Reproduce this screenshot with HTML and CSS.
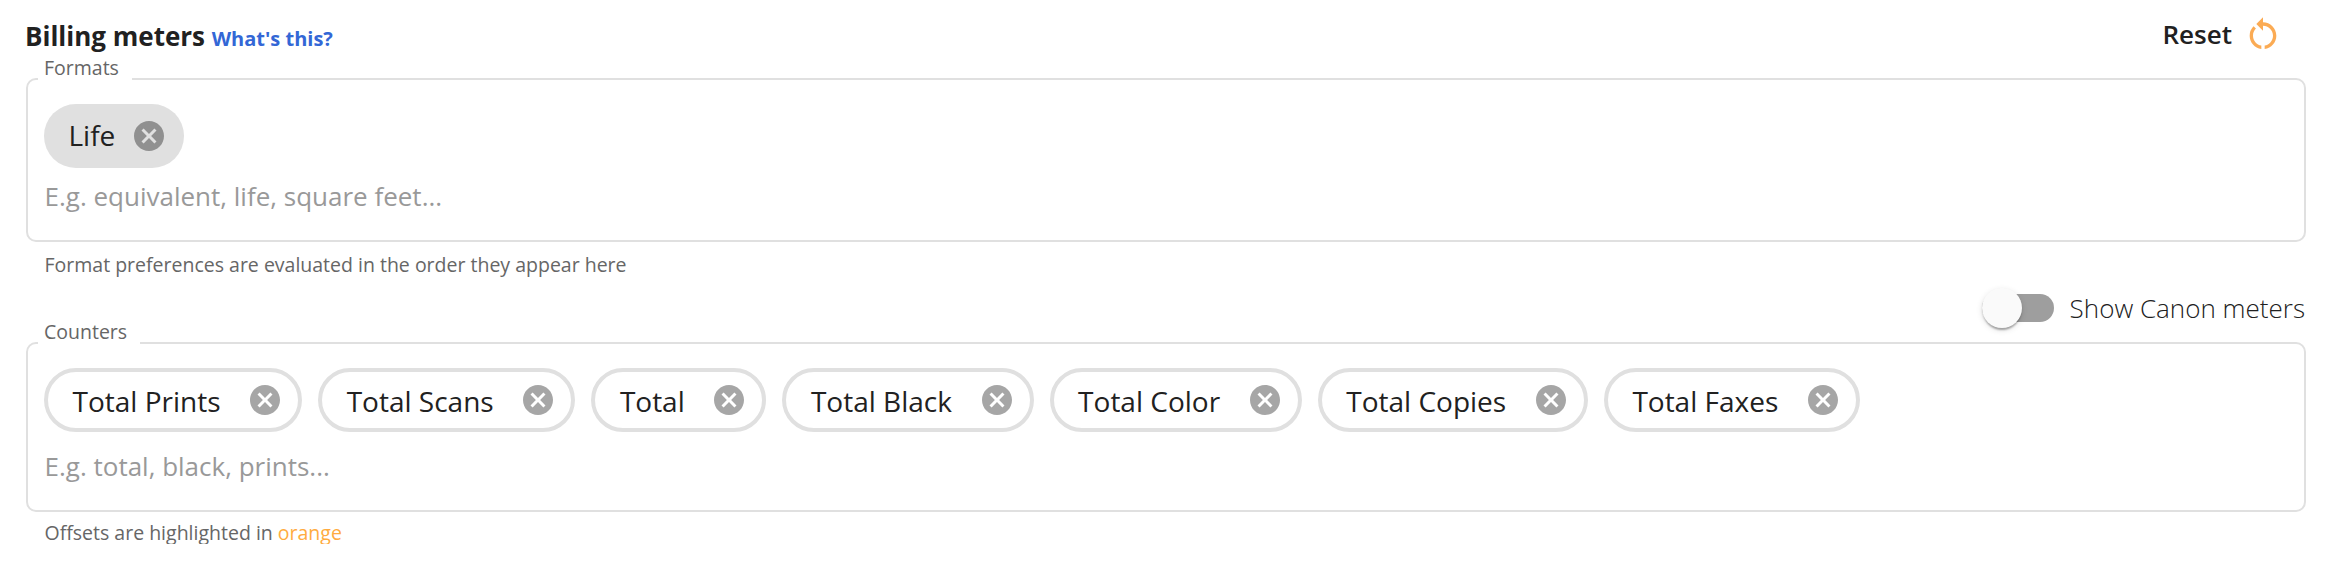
FILE: index.html
```
<!DOCTYPE html>
<html lang="en">
<head>
<meta charset="utf-8">
<title>Billing meters</title>
<link rel="stylesheet" href="styles.css">
</head>
<body>
<svg class="symbols" width="0" height="0" aria-hidden="true">
  <symbol id="cancel" viewBox="0 0 24 24"><path d="M12 2C6.47 2 2 6.47 2 12s4.47 10 10 10 10-4.47 10-10S17.53 2 12 2zm5 13.59L15.59 17 12 13.41 8.41 17 7 15.59 10.59 12 7 8.41 8.41 7 12 10.59 15.59 7 17 8.41 13.41 12 17 15.59z"/></symbol>
</svg>
<main class="page">
  <header class="header">
    <h1 class="title">Billing meters <a class="help">What's this?</a></h1>
    <div class="reset"><span class="reset-text">Reset</span>
      <svg class="reset-icon" viewBox="0 0 24 24"><path d="M12 5V2L8 6l4 4V7c3.31 0 6 2.69 6 6 0 2.97-2.17 5.43-5 5.91v2.02c3.95-.49 7-3.85 7-7.93 0-4.42-3.58-8-8-8zm-6 8c0-1.65.67-3.15 1.76-4.24L6.34 7.34A8.014 8.014 0 0 0 4 13c0 4.08 3.05 7.44 7 7.93v-2.02c-2.83-.48-5-2.94-5-5.91z"/></svg>
    </div>
  </header>
  <section class="field formats">
    <span class="label">Formats</span>
    <div class="chips">
      <span class="chip filled"><span class="chip-text">Life</span><svg class="remove"><use href="#cancel"/></svg></span>
    </div>
    <div class="placeholder">E.g. equivalent, life, square feet...</div>
  </section>
  <p class="hint">Format preferences are evaluated in the order they appear here</p>
  <div class="toggle-row">
    <span class="toggle"><span class="thumb"></span></span>
    <span class="toggle-text">Show Canon meters</span>
  </div>
  <section class="field counters">
    <span class="label">Counters</span>
    <div class="chips">
      <span class="chip"><span class="chip-text">Total Prints</span><svg class="remove"><use href="#cancel"/></svg></span>
      <span class="chip"><span class="chip-text">Total Scans</span><svg class="remove"><use href="#cancel"/></svg></span>
      <span class="chip"><span class="chip-text">Total</span><svg class="remove"><use href="#cancel"/></svg></span>
      <span class="chip"><span class="chip-text">Total Black</span><svg class="remove"><use href="#cancel"/></svg></span>
      <span class="chip"><span class="chip-text">Total Color</span><svg class="remove"><use href="#cancel"/></svg></span>
      <span class="chip"><span class="chip-text">Total Copies</span><svg class="remove"><use href="#cancel"/></svg></span>
      <span class="chip"><span class="chip-text">Total Faxes</span><svg class="remove"><use href="#cancel"/></svg></span>
    </div>
    <div class="placeholder">E.g. total, black, prints...</div>
  </section>
  <p class="hint">Offsets are highlighted in <span class="orange">orange</span></p>
</main>
</body>
</html>
```
FILE: styles.css
```
* { box-sizing: border-box; }
body {
  margin: 0;
  background: #fff;
  color: #212121;
  font-family: "Open Sans", "Noto Sans", sans-serif;
  font-size: 26px;
}
.symbols { display: block; }
.page { padding: 0 26px; }
.header {
  display: flex;
  justify-content: space-between;
  height: 78px;
}
.title {
  margin: 0 0 0 -1px;
  padding-top: 18px;
  font-size: 26px;
  font-weight: 700;
  line-height: 36px;
}
.help { font-size: 20px; color: #3367d6; }
.reset {
  display: flex;
  align-items: center;
  gap: 11px;
  height: 40px;
  margin: 14px 23px 0 0;
  font-weight: 600;
}
.reset-icon { width: 40px; height: 40px; fill: #fbab54; }
.field {
  position: relative;
  padding: 24px 16px 0;
  border: 2px solid #e0e0e0;
  border-radius: 10px;
}
.formats { height: 164px; }
.counters { height: 170px; }
.label {
  position: absolute;
  top: -26px;
  left: 10px;
  padding: 0 13px 0 6px;
  background: #fff;
  color: #666;
  font-size: 19.5px;
  line-height: 28px;
}
.chips { display: flex; gap: 16px; }
.chip {
  display: flex;
  align-items: center;
  height: 64px;
  padding: 0 15px 0 24.5px;
  border: 4px solid #e0e0e0;
  border-radius: 32px;
  font-size: 28px;
  line-height: 40px;
}
.chip-text { padding-top: 2px; }
.remove { width: 36px; height: 36px; margin-left: 26.7px; fill: #a6a6a6; }
.filled { padding: 0 17px 0 24.5px; border: 0; background: #e0e0e0; }
.filled .chip-text { padding: 0 0 2px; }
.filled .remove { margin-left: 16px; fill: #909090; }
.placeholder {
  padding-left: .5px;
  color: #999;
  line-height: 36px;
  margin-top: 10px;
}
.counters .placeholder { margin-top: 16px; }
.hint {
  height: 23px;
  margin: 11px 0 0;
  padding-left: 18.5px;
  color: #666;
  font-size: 19.5px;
  line-height: 24px;
}
.counters + .hint { margin-top: 9px; }
.orange { color: #ffab40; }
.toggle-row {
  display: flex;
  align-items: center;
  justify-content: flex-end;
  gap: 16px;
  height: 64px;
  margin-bottom: 2px;
  padding-right: 1px;
  font-weight: 300;
}
.toggle {
  display: flex;
  align-items: center;
  width: 72px;
  height: 28px;
  border-radius: 14px;
  background: #9e9e9e;
}
.thumb {
  flex: none;
  width: 40px;
  height: 40px;
  border-radius: 50%;
  background: #fafafa;
  box-shadow: 0 4px 2px -2px rgba(0,0,0,.2), 0 2px 2px rgba(0,0,0,.14), 0 2px 6px rgba(0,0,0,.12);
}
```
